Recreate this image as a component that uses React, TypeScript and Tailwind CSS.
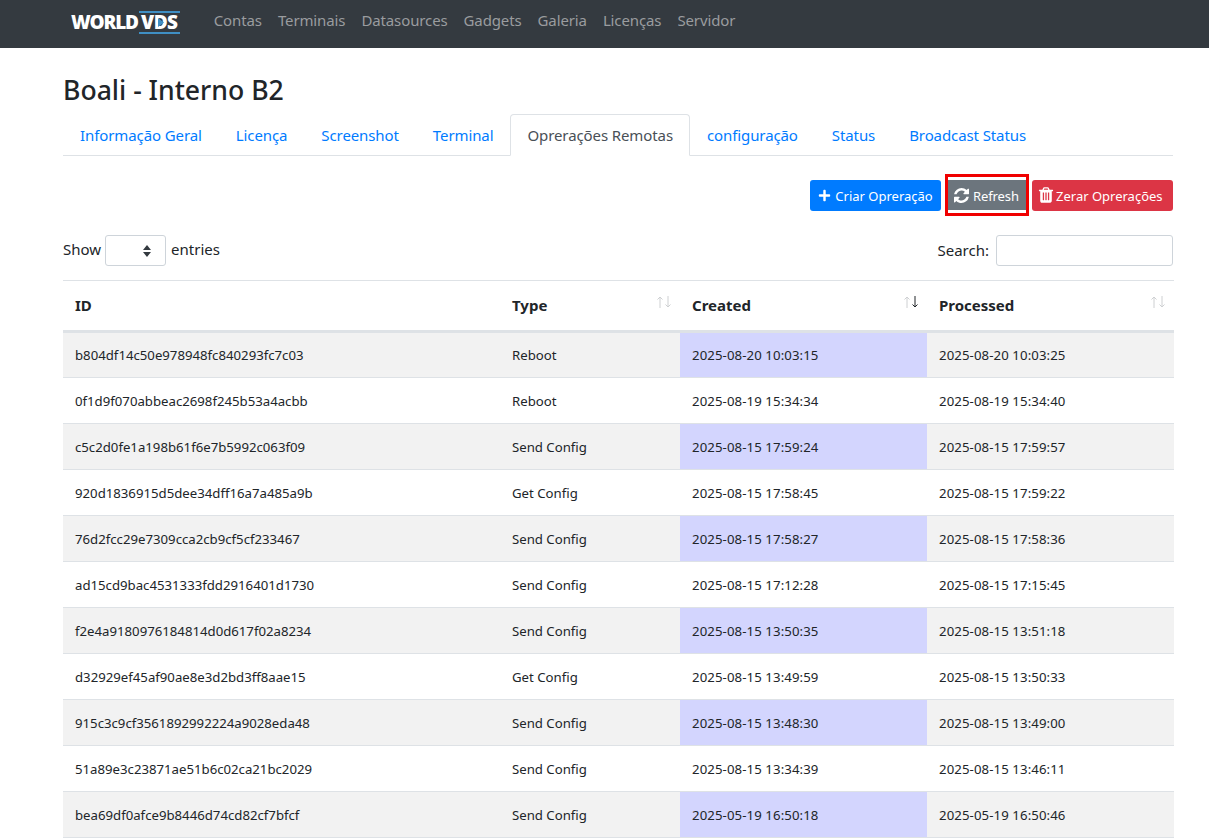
import { FaPlus } from "react-icons/fa";

const navLinks = ["Contas", "Terminais", "Datasources", "Gadgets", "Galeria", "Licenças", "Servidor"];
const tabs = ["Informação Geral", "Licença", "Screenshot", "Terminal", "Oprerações Remotas", "configuração", "Status", "Broadcast Status"];

const rows = [
  ["b804df14c50e978948fc840293fc7c03", "Reboot", "2025-08-20 10:03:15", "2025-08-20 10:03:25"],
  ["0f1d9f070abbeac2698f245b53a4acbb", "Reboot", "2025-08-19 15:34:34", "2025-08-19 15:34:40"],
  ["c5c2d0fe1a198b61f6e7b5992c063f09", "Send Config", "2025-08-15 17:59:24", "2025-08-15 17:59:57"],
  ["920d1836915d5dee34dff16a7a485a9b", "Get Config", "2025-08-15 17:58:45", "2025-08-15 17:59:22"],
  ["76d2fcc29e7309cca2cb9cf5cf233467", "Send Config", "2025-08-15 17:58:27", "2025-08-15 17:58:36"],
  ["ad15cd9bac4531333fdd2916401d1730", "Send Config", "2025-08-15 17:12:28", "2025-08-15 17:15:45"],
  ["f2e4a9180976184814d0d617f02a8234", "Send Config", "2025-08-15 13:50:35", "2025-08-15 13:51:18"],
  ["d32929ef45af90ae8e3d2bd3ff8aae15", "Get Config", "2025-08-15 13:49:59", "2025-08-15 13:50:33"],
  ["915c3c9cf3561892992224a9028eda48", "Send Config", "2025-08-15 13:48:30", "2025-08-15 13:49:00"],
  ["51a89e3c23871ae51b6c02ca21bc2029", "Send Config", "2025-08-15 13:34:39", "2025-08-15 13:46:11"],
  ["bea69df0afce9b8446d74cd82cf7bfcf", "Send Config", "2025-05-19 16:50:18", "2025-05-19 16:50:46"],
];

function SortArrows({ active }: { active?: boolean }) {
  return (
    <svg width="16" height="14" viewBox="0 0 16 14" className="absolute right-[8px] top-[14px]" aria-hidden="true">
      <path d="M4 13V2M1.5 4.5 4 2l2.5 2.5" fill="none" stroke="#ced0d2" strokeWidth="1" />
      <path d="M12 1v11M9.5 9.5 12 12l2.5-2.5" fill="none" stroke={active ? "#212529" : "#ced0d2"} strokeWidth="1" />
    </svg>
  );
}

function RefreshIcon() {
  return (
    <svg viewBox="128 128 1536 1536" className="size-[15px] shrink-0" fill="currentColor" aria-hidden="true">
      <path d="M1639 1056q0 5-1 7-64 268-268 434.5t-478 166.5q-146 0-282.5-55t-243.5-157l-129 129q-19 19-45 19t-45-19-19-45v-448q0-26 19-45t45-19h448q26 0 45 19t19 45-19 45l-137 137q71 66 161 102t187 36q134 0 250-65t186-179q11-17 53-117 8-23 30-23h192q13 0 22.5 9.5t9.5 22.5zm25-800v448q0 26-19 45t-45 19h-448q-26 0-45-19t-19-45 19-45l138-138q-148-137-349-137-134 0-250 65t-186 179q-11 17-53 117-8 23-30 23h-199q-13 0-22.5-9.5t-9.5-22.5v-7q65-268 270-434.5t480-166.5q146 0 284 55.5t245 156.5l130-129q19-19 45-19t45 19 19 45z" />
    </svg>
  );
}

function TrashIcon() {
  return (
    <svg viewBox="0 0 1792 1792" className="size-[18px] shrink-0" fill="currentColor" aria-hidden="true">
      <path d="M704 1376v-704q0-14-9-23t-23-9h-64q-14 0-23 9t-9 23v704q0 14 9 23t23 9h64q14 0 23-9t9-23zm256 0v-704q0-14-9-23t-23-9h-64q-14 0-23 9t-9 23v704q0 14 9 23t23 9h64q14 0 23-9t9-23zm256 0v-704q0-14-9-23t-23-9h-64q-14 0-23 9t-9 23v704q0 14 9 23t23 9h64q14 0 23-9t9-23zm-544-992h448l-48-117q-7-9-17-11h-317q-10 2-17 11zm928 32v64q0 14-9 23t-23 9h-96v948q0 83-47 143.5t-113 60.5h-832q-66 0-113-58.5t-47-141.5v-952h-96q-14 0-23-9t-9-23v-64q0-14 9-23t23-9h309l70-167q15-37 54-63t79-26h320q40 0 79 26t54 63l70 167h309q14 0 23 9t9 23z" />
    </svg>
  );
}

function Logo() {
  return (
    <div className="flex items-center font-['Open_Sans',sans-serif] text-[19px] font-extrabold text-white">
      <span className="tracking-[-1.2px]">WORLD</span>
      <span className="relative ml-px w-[41px] border-y-2 border-[#3f8fc4] text-center leading-[19px] tracking-[-0.6px]">
        VDS
        <svg width="6" height="9" viewBox="0 0 6 9" className="absolute left-[19px] top-[5px]" aria-hidden="true">
          <path d="M0 0 6 4.5 0 9Z" fill="#3f8fc4" />
        </svg>
      </span>
    </div>
  );
}

export default function App() {
  return (
    <div className="min-h-[839px] bg-white font-['Noto_Sans',sans-serif] text-[#212529]">
      <nav className="flex h-12 items-start bg-[#343a40] pl-[71px]">
        <div className="mt-[8px]">
          <Logo />
        </div>
        <div className="ml-[26px] mt-[8px] flex">
          {navLinks.map((link) => (
            <a key={link} className="px-2 text-[15px] leading-6 tracking-[-0.12px] text-[#9a9c9f]">
              {link}
            </a>
          ))}
        </div>
      </nav>

      <main className="ml-[63px] w-[1110px]">
        <h1 className="mt-[24px] text-[26.6px] font-medium leading-[36px]">Boali - Interno B2</h1>

        <div className="mt-[6px] flex border-b border-[#dee2e6]">
          {tabs.map((tab) => {
            const active = tab === "Oprerações Remotas";
            return (
              <a
                key={tab}
                className={
                  active
                    ? "-mb-px rounded-t border border-[#dee2e6] border-b-white bg-white px-4 pb-[7px] pt-[9px] text-[15px] leading-[23px] tracking-[-0.1px] text-[#495057]"
                    : "border border-transparent px-4 pb-[7px] pt-[9px] text-[15px] leading-[23px] tracking-[-0.1px] text-[#007bff]"
                }
              >
                {tab}
              </a>
            );
          })}
        </div>

        <div className="mt-[18px] flex items-center justify-end">
          <button className="mr-[4px] flex h-[31px] w-[131px] items-center justify-center gap-1 rounded-[3px] bg-[#007bff] text-[13px] text-white">
            <FaPlus className="size-[13px]" />
            <span className="pt-[4px]">Criar Opreração</span>
          </button>
          <div className="border-[3px] border-[#f00000] py-[3px]">
            <button className="flex h-[30px] w-[78px] items-center gap-1 bg-[#6c757d] px-[6px] text-[13px] tracking-[-0.1px] text-white">
              <RefreshIcon />
              <span className="pt-[4px]">Refresh</span>
            </button>
          </div>
          <button className="ml-[3px] flex h-[31px] w-[141px] items-center gap-px rounded-[3px] bg-[#dc3545] px-[5px] text-[13px] text-white">
            <TrashIcon />
            <span className="pt-[4px]">Zerar Oprerações</span>
          </button>
        </div>

        <div className="mt-[19px] flex h-[31px] items-center justify-between text-[15px]">
          <div className="flex items-center">
            <span className="mr-1 pb-[2px]">Show</span>
            <div className="relative h-[31px] w-[61px] rounded-[3px] border border-[#ced4da]">
              <svg width="10" height="14" viewBox="0 0 10 14" className="absolute right-[13px] top-[8px]" aria-hidden="true">
                <path d="M1 6 5 1l4 5ZM1 8l4 5 4-5Z" fill="#343a40" />
              </svg>
            </div>
            <span className="ml-[5px] pb-[2px]">entries</span>
          </div>
          <div className="flex items-center gap-[7px]">
            <span>Search:</span>
            <div className="h-[31px] w-[177px] rounded-[3px] border border-[#ced4da]" />
          </div>
        </div>

        <table className="mt-[14px] w-[1111px] table-fixed border-collapse text-[13.2px]">
          <thead>
            <tr className="h-[51px] border-t border-b-[3px] border-[#dee2e6] text-left text-[15px]">
              <th className="relative w-[437px] px-3 font-bold">ID</th>
              <th className="relative w-[180px] px-3 font-bold">
                Type
                <SortArrows />
              </th>
              <th className="relative w-[247px] px-3 font-bold">
                Created
                <SortArrows active />
              </th>
              <th className="relative w-[247px] px-3 font-bold">
                Processed
                <SortArrows />
              </th>
            </tr>
          </thead>
          <tbody>
            {rows.map((row, i) => (
              <tr key={row[0]} className={i % 2 === 0 ? "h-[46px] border-b border-[#dee2e6] bg-[#f2f2f2]" : "h-[46px] border-b border-[#dee2e6] bg-white"}>
                <td className="px-3 pt-[2px]">{row[0]}</td>
                <td className="px-3 pt-[2px]">{row[1]}</td>
                <td className={i % 2 === 0 ? "bg-[#d3d5fe] px-3 pt-[2px] tracking-[0.1px]" : "px-3 pt-[2px] tracking-[0.1px]"}>{row[2]}</td>
                <td className="px-3 pt-[2px] tracking-[0.1px]">{row[3]}</td>
              </tr>
            ))}
          </tbody>
        </table>
      </main>
    </div>
  );
}
